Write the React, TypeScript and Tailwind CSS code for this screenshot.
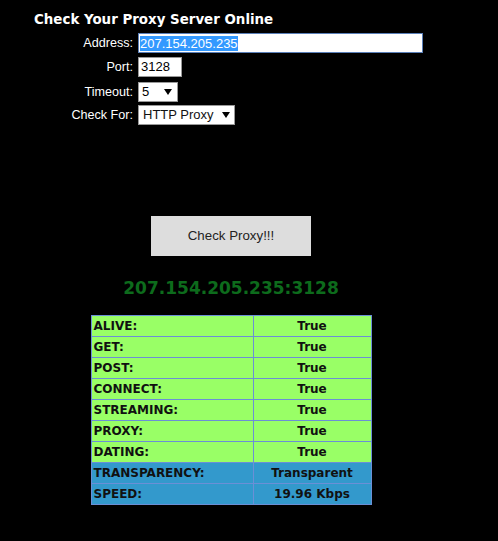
import React from "react";

const rows: [string, string, boolean][] = [
  ["ALIVE:", "True", false],
  ["GET:", "True", false],
  ["POST:", "True", false],
  ["CONNECT:", "True", false],
  ["STREAMING:", "True", false],
  ["PROXY:", "True", false],
  ["DATING:", "True", false],
  ["TRANSPARENCY:", "Transparent", true],
  ["SPEED:", "19.96 Kbps", true],
];

function Caret() {
  return (
    <svg width="8" height="6" viewBox="0 0 8 6" className="ml-auto">
      <path d="M0 0 L8 0 L4 6 Z" fill="#000" />
    </svg>
  );
}

export default function App() {
  return (
    <div className="min-h-[541px] w-[498px] bg-black text-white">
      <div className="w-[462px] pt-[12px]">
        <div className="pl-[34px] text-[13.4px] font-bold leading-[16px] font-['DejaVu_Sans',sans-serif]">
          Check Your Proxy Server Online
        </div>
        <div className="mt-[5px] grid grid-cols-[133px_auto] gap-x-[5px] font-['Liberation_Sans',Arial,sans-serif] text-[12.6px]">
          <div className="flex h-[20px] items-center justify-end">Address:</div>
          <div className="flex h-[20px] w-[285px] items-center border border-[#5a7fb8] bg-white pl-[1px] text-[13px] text-black">
            <span className="bg-[#3399ff] text-white leading-[15px]">207.154.205.235</span>
          </div>

          <div className="mt-[4px] flex h-[20px] items-center justify-end">Port:</div>
          <div className="mt-[4px] flex h-[20px] w-[44px] items-center border border-[#999] bg-white pl-[2px] text-[13px] text-black">
            3128
          </div>

          <div className="mt-[5px] flex h-[20px] items-center justify-end">Timeout:</div>
          <div className="mt-[5px] flex h-[20px] w-[40px] items-center border border-[#999] bg-white pl-[3px] pr-[5px] text-[13px] text-black">
            5
            <Caret />
          </div>

          <div className="mt-[3px] flex h-[20px] items-center justify-end">Check For:</div>
          <div className="mt-[3px] flex h-[20px] w-[97px] items-center border border-[#999] bg-white pl-[4px] pr-[4px] text-[13px] text-[#111]">
            HTTP Proxy
            <Caret />
          </div>
        </div>

        <div className="mt-[91px] flex justify-center">
          <div className="flex h-[40px] w-[160px] items-center justify-center bg-[#dddddd] font-['Liberation_Sans',Arial,sans-serif] text-[13.3px] text-[#222]">
            Check Proxy!!!
          </div>
        </div>

        <div className="mt-[20px] text-center font-['DejaVu_Sans',sans-serif] text-[17px] font-bold leading-[24px] text-[#0d6b1c]">
          207.154.205.235:3128
        </div>

        <div className="mt-[15px] flex justify-center">
          <table className="w-[281px] border-collapse font-['DejaVu_Sans',sans-serif] text-[12px] font-bold text-[#111]">
            <tbody>
              {rows.map(([k, v, blue]) => (
                <tr key={k} className={blue ? "bg-[#3399cc]" : "bg-[#99ff66]"}>
                  <td className="h-[21px] w-[162px] border border-[#6b8fd6] pl-[2px] leading-[20px]">{k}</td>
                  <td className="h-[21px] border border-[#6b8fd6] text-center leading-[20px]">{v}</td>
                </tr>
              ))}
            </tbody>
          </table>
        </div>
      </div>
    </div>
  );
}
